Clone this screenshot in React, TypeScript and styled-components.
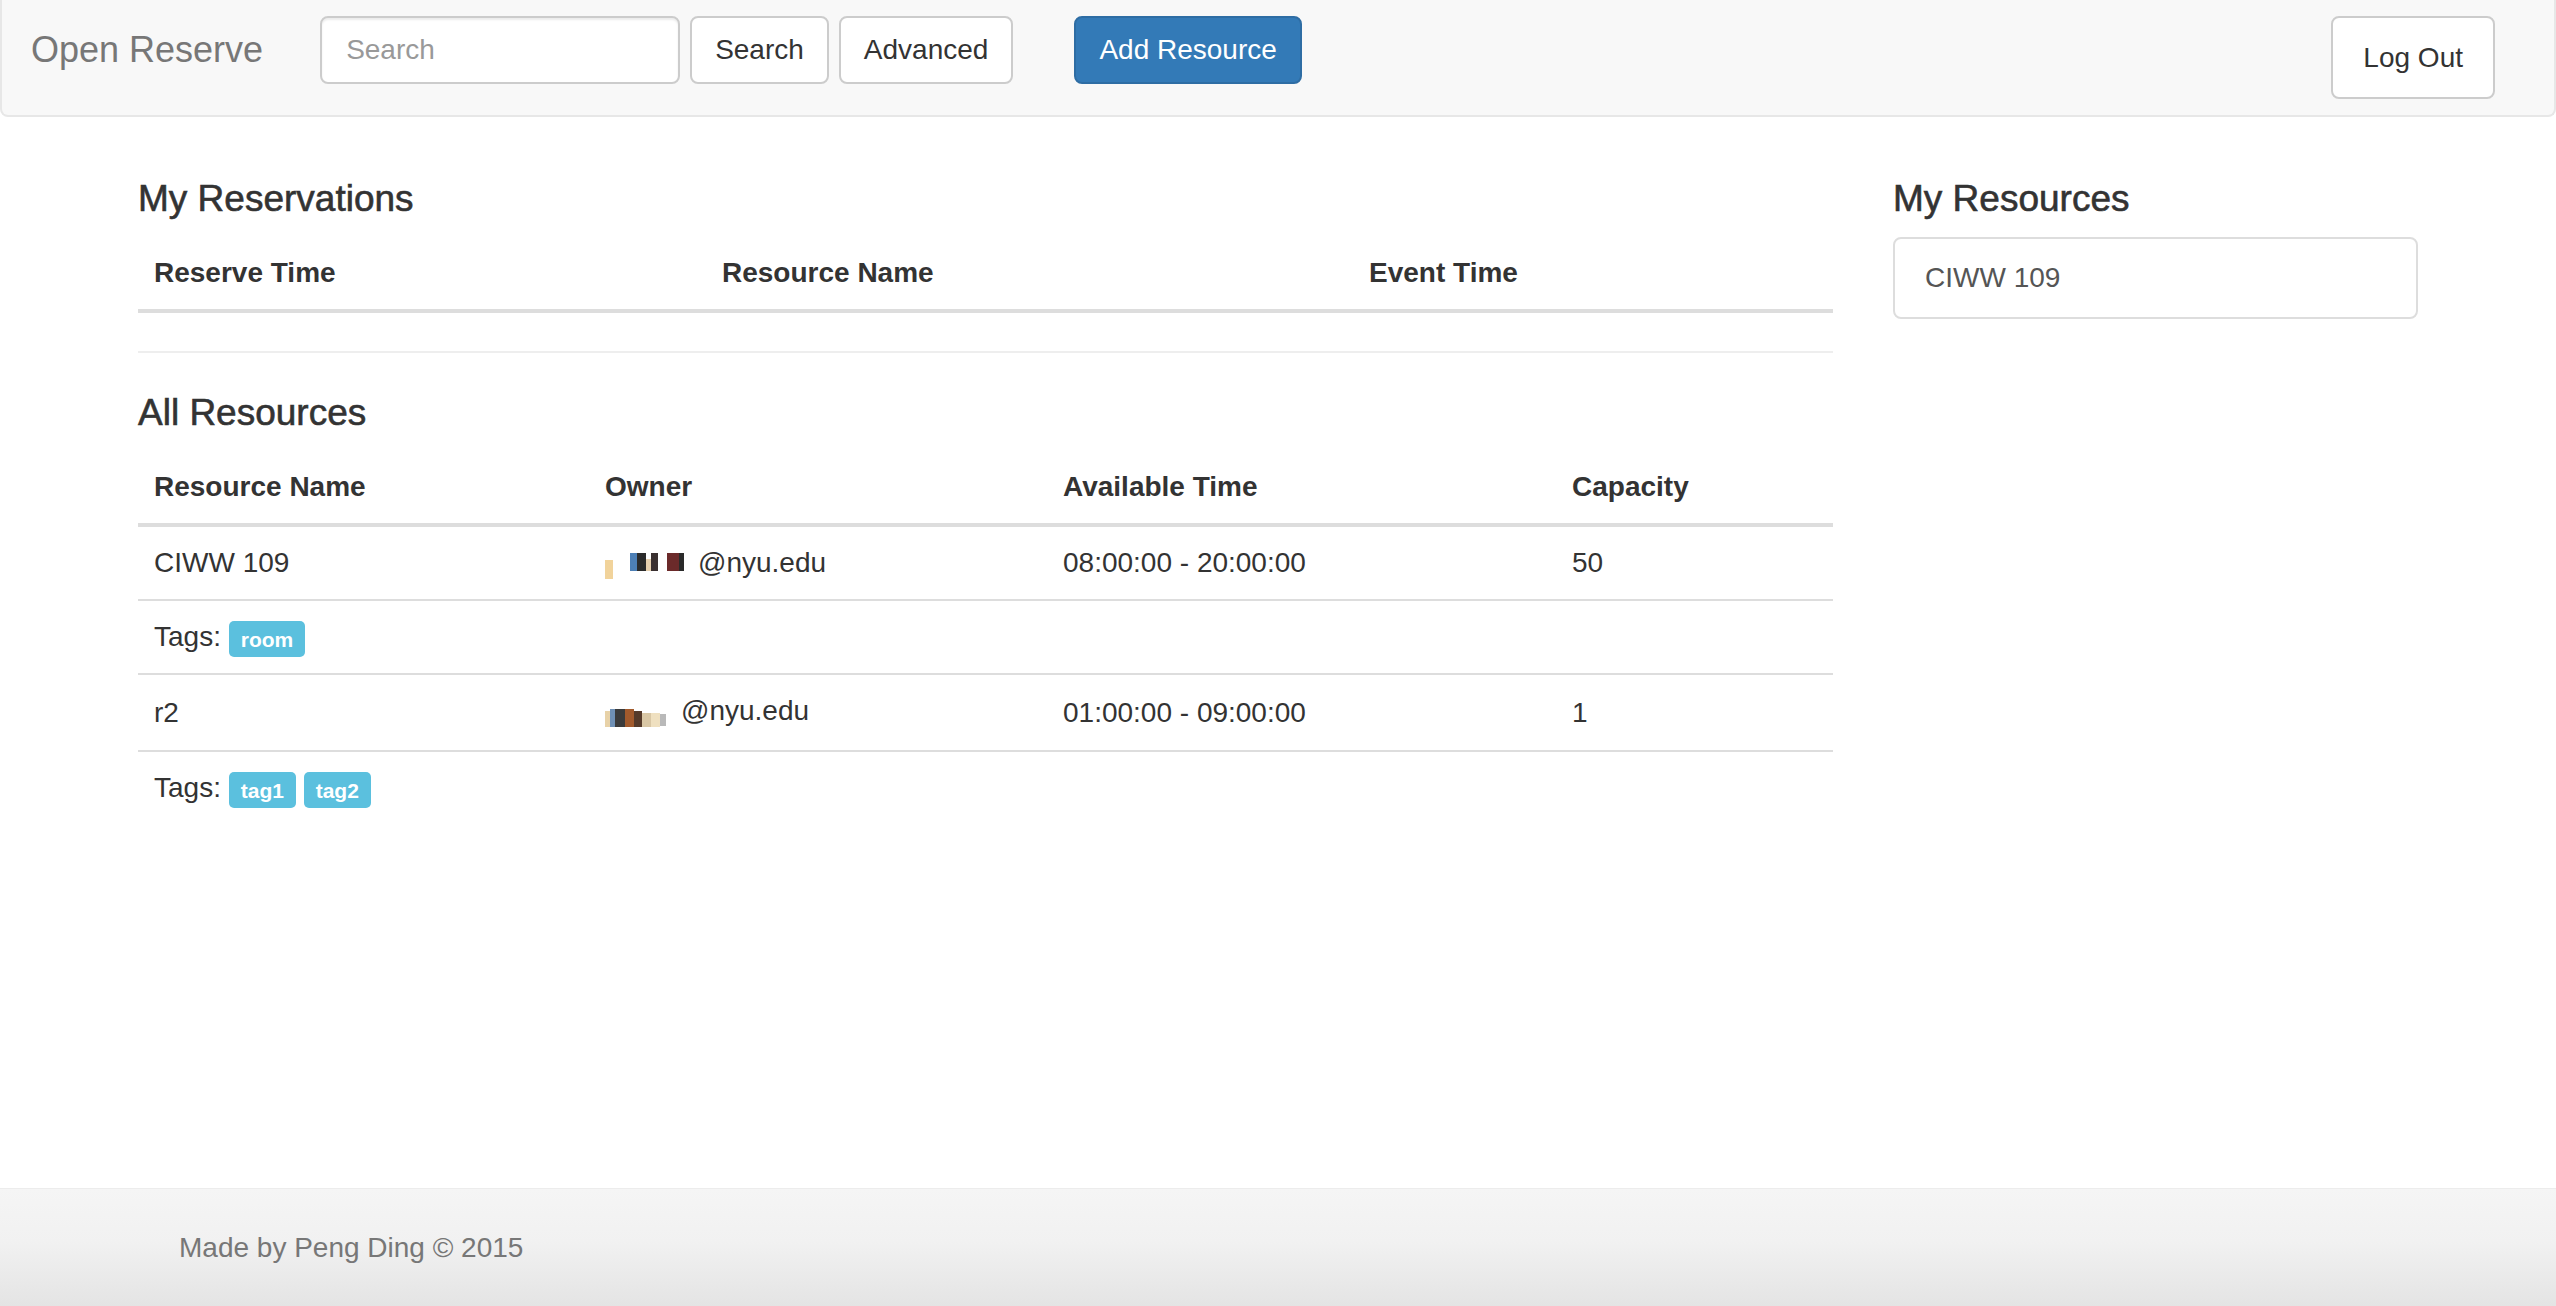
import React from "react";
import styled, { createGlobalStyle } from "styled-components";

const Global = createGlobalStyle`
  html, body { margin: 0; padding: 0; }
  body {
    font-family: "Liberation Sans", Arial, Helvetica, sans-serif;
    font-size: 28px;
    line-height: 40px;
    color: #333;
    background: #fff;
  }
  * { box-sizing: border-box; }
`;

const Page = styled.div`
  min-height: 100vh;
  display: flex;
  flex-direction: column;
`;

const Navbar = styled.nav`
  height: 117px;
  background: #f8f8f8;
  border: 2px solid #e7e7e7;
  border-top: 0;
  border-radius: 0 0 8px 8px;
  display: flex;
  align-items: flex-start;
  padding: 16px 59px 0 29px;
`;

const Brand = styled.a`
  font-size: 36px;
  line-height: 40px;
  color: #777;
  text-decoration: none;
  margin-top: 14px;
  margin-right: 57px;
`;

const SearchInput = styled.input`
  width: 360px;
  height: 68px;
  border: 2px solid #ccc;
  border-radius: 8px;
  padding: 0 24px;
  font-family: inherit;
  font-size: 28px;
  color: #555;
  background: #fff;
  box-shadow: inset 0 2px 2px rgba(0, 0, 0, 0.075);
  &::placeholder { color: #999; }
`;

const Button = styled.button<{ $primary?: boolean; $gap?: number }>`
  height: 68px;
  padding: 0 23px;
  margin-left: ${(p) => p.$gap ?? 10}px;
  border: 2px solid ${(p) => (p.$primary ? "#2e6da4" : "#ccc")};
  border-radius: 8px;
  background: ${(p) => (p.$primary ? "#337ab7" : "#fff")};
  color: ${(p) => (p.$primary ? "#fff" : "#333")};
  font-family: inherit;
  font-size: 28px;
  line-height: 40px;
  white-space: nowrap;
`;

const LogOut = styled.button`
  margin-left: auto;
  height: 83px;
  padding: 0 30px;
  border: 2px solid #ccc;
  border-radius: 8px;
  background: #fff;
  color: #333;
  font-family: inherit;
  font-size: 28px;
  line-height: 40px;
`;

const Main = styled.main`
  flex: 1;
  width: 2340px;
  margin: 0 auto;
  padding: 55px 30px 0;
  display: grid;
  grid-template-columns: 1695px 525px;
  column-gap: 60px;
  align-items: start;
`;

const Column = styled.section`
  display: flex;
  flex-direction: column;
`;

const Heading = styled.h3<{ $top?: number }>`
  margin: ${(p) => p.$top ?? 0}px 0 12px;
  font-size: 37px;
  line-height: 53px;
  font-weight: 400;
  color: #333;
  -webkit-text-stroke: 0.6px #333;
`;

const Table = styled.table<{ $bottom?: number }>`
  width: 100%;
  border-collapse: collapse;
  table-layout: fixed;
  margin-bottom: ${(p) => p.$bottom ?? 40}px;
`;

const Th = styled.th<{ $w: number }>`
  width: ${(p) => p.$w}px;
  padding: 16px;
  text-align: left;
  font-weight: 700;
  line-height: 40px;
  border-bottom: 4px solid #ddd;
`;

const Td = styled.td`
  padding: 16px;
  line-height: 40px;
  border-top: 2px solid #ddd;
  white-space: nowrap;
`;

const Divider = styled.hr`
  margin: 0;
  border: 0;
  border-top: 2px solid #eee;
`;

const Label = styled.span`
  display: inline-block;
  vertical-align: top;
  margin-top: 4px;
  height: 36px;
  padding: 0 12px;
  background: #5bc0de;
  color: #fff;
  font-size: 21px;
  font-weight: 700;
  line-height: 37px;
  border-radius: 5px;
`;

const Redacted = styled.span<{ $w: number }>`
  display: inline-flex;
  align-items: flex-end;
  width: ${(p) => p.$w}px;
  height: 28px;
  vertical-align: -7px;
`;

const Pixel = styled.span<{ $w: number; $h: number; $c: string; $ml?: number; $mb?: number }>`
  display: inline-block;
  width: ${(p) => p.$w}px;
  height: ${(p) => p.$h}px;
  background: ${(p) => p.$c};
  margin-left: ${(p) => p.$ml ?? 0}px;
  margin-bottom: ${(p) => p.$mb ?? 0}px;
`;

const ListGroup = styled.div`
  border: 2px solid #ddd;
  border-radius: 8px;
  padding: 19px 30px;
  line-height: 40px;
  color: #555;
`;

const Footer = styled.footer`
  height: 118px;
  border-top: 1px solid #ececec;
  background: linear-gradient(to bottom, #f5f5f5 0%, #f1f1f1 45%, #e4e4e4 100%);
`;

const FooterInner = styled.div`
  width: 2340px;
  margin: 0 auto;
  padding: 39px 30px 0 71px;
  color: #777;
  line-height: 40px;
`;

type Block = { w: number; h: number; c: string; ml?: number; mb?: number };

const owner1: Block[] = [
  { w: 8, h: 19, c: "#f1d39b", mb: 0 },
  { w: 7, h: 18, c: "#4d7fb5", ml: 17, mb: 8 },
  { w: 9, h: 18, c: "#2b2b2b", mb: 8 },
  { w: 5, h: 12, c: "#e6d0ae", mb: 8 },
  { w: 7, h: 18, c: "#3a3030", mb: 8 },
  { w: 9, h: 18, c: "#fff", mb: 8 },
  { w: 12, h: 18, c: "#6b2a2a", mb: 8 },
  { w: 5, h: 18, c: "#2a2a2a", mb: 8 },
];

const owner2: Block[] = [
  { w: 5, h: 16, c: "#e8d2a8", mb: 7 },
  { w: 5, h: 18, c: "#6f90b5", mb: 7 },
  { w: 10, h: 18, c: "#3b3b3b", mb: 7 },
  { w: 9, h: 18, c: "#a25a2c", mb: 7 },
  { w: 8, h: 16, c: "#553a2a", mb: 7 },
  { w: 9, h: 14, c: "#d9c7a5", mb: 7 },
  { w: 9, h: 14, c: "#efe0c0", mb: 7 },
  { w: 6, h: 12, c: "#b9b9b9", mb: 8 },
];

const Owner: React.FC<{ blocks: Block[]; width: number }> = ({ blocks, width }) => (
  <>
    <Redacted $w={width}>
      {blocks.map((b, i) => (
        <Pixel key={i} $w={b.w} $h={b.h} $c={b.c} $ml={b.ml} $mb={b.mb} />
      ))}
    </Redacted>
    @nyu.edu
  </>
);

const resources = [
  { name: "CIWW 109", owner: owner1, ownerW: 93, time: "08:00:00 - 20:00:00", cap: "50", tags: ["room"] },
  { name: "r2", owner: owner2, ownerW: 76, time: "01:00:00 - 09:00:00", cap: "1", tags: ["tag1", "tag2"] },
];

export default function App() {
  return (
    <Page>
      <Global />
      <Navbar>
        <Brand href="#">Open Reserve</Brand>
        <SearchInput placeholder="Search" />
        <Button>Search</Button>
        <Button>Advanced</Button>
        <Button $primary $gap={61}>Add Resource</Button>
        <LogOut>Log Out</LogOut>
      </Navbar>
      <Main>
        <Column>
          <Heading>My Reservations</Heading>
          <Table $bottom={38}>
            <thead>
              <tr>
                <Th $w={568}>Reserve Time</Th>
                <Th $w={647}>Resource Name</Th>
                <Th $w={480}>Event Time</Th>
              </tr>
            </thead>
            <tbody />
          </Table>
          <Divider />
          <Heading $top={33}>All Resources</Heading>
          <Table>
            <thead>
              <tr>
                <Th $w={451}>Resource Name</Th>
                <Th $w={458}>Owner</Th>
                <Th $w={509}>Available Time</Th>
                <Th $w={277}>Capacity</Th>
              </tr>
            </thead>
            <tbody>
              {resources.map((r) => (
                <React.Fragment key={r.name}>
                  <tr>
                    <Td>{r.name}</Td>
                    <Td>
                      <Owner blocks={r.owner} width={r.ownerW} />
                    </Td>
                    <Td>{r.time}</Td>
                    <Td>{r.cap}</Td>
                  </tr>
                  <tr>
                    <Td colSpan={4}>
                      Tags:{" "}
                      {r.tags.map((t, i) => (
                        <React.Fragment key={t}>
                          {i > 0 && " "}
                          <Label>{t}</Label>
                        </React.Fragment>
                      ))}
                    </Td>
                  </tr>
                </React.Fragment>
              ))}
            </tbody>
          </Table>
        </Column>
        <Column>
          <Heading>My Resources</Heading>
          <ListGroup>CIWW 109</ListGroup>
        </Column>
      </Main>
      <Footer>
        <FooterInner>Made by Peng Ding © 2015</FooterInner>
      </Footer>
    </Page>
  );
}
